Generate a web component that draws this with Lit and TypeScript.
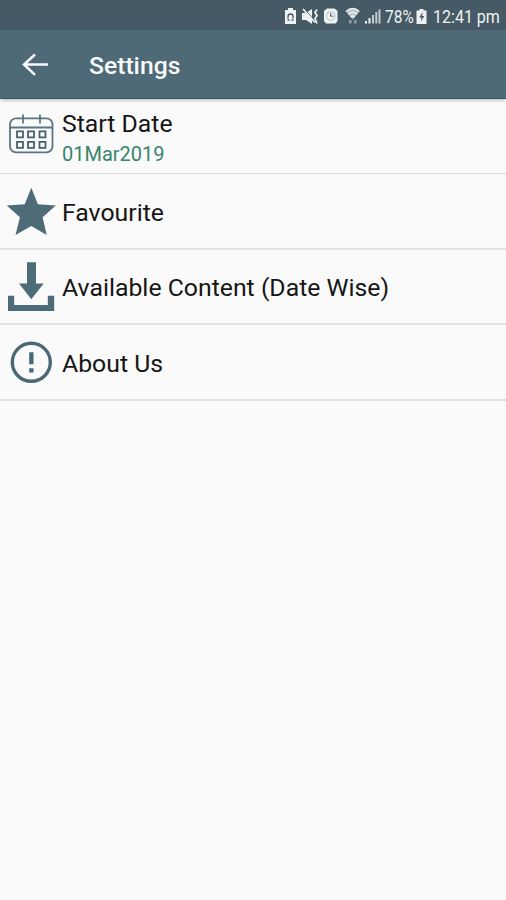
import { LitElement, html, svg, css } from "lit";
import { customElement } from "lit/decorators.js";

const calendar = svg`
  <g fill="none" stroke="#5c7581" stroke-width="1.8">
    <rect x="10" y="19.3" width="42.5" height="34" rx="6"/>
    <path d="M10 28.5H52.5M23 15.5V24.5M40 15.5V24.5"/>
    <path stroke="#44616f" d="M17 32.3h6v6h-6zM28 32.3h6v6h-6zM39.5 32.3h6v6h-6zM17 42.8h6v6h-6zM28 42.8h6v6h-6zM39.5 42.8h6v6h-6z"/>
  </g>`;
const star = svg`<path fill="#4e6b78" d="M31.3 13.7L37.9 30.2L55.8 31.6L42.6 43.2L46.7 61L31.3 52L15.5 61L19.9 43.2L6.8 31.6L24.7 30.2Z"/>`;
const download = svg`<path fill="#4e6b78" d="M27 13.3H36V34.5H43.7L31.3 50.2L19 34.5H27ZM8 46.7H14.2V56H47.8V46.7H54.2V62H8Z"/>`;
const about = svg`
  <circle cx="31.3" cy="37.3" r="19" fill="none" stroke="#4a6877" stroke-width="3.4"/>
  <path fill="#4a6877" d="M29.2 27.3H33.5V39.2H29.2ZM29.2 43.3H33.5V47.4H29.2Z"/>`;

@customElement("app-root")
export class AppRoot extends LitElement {
  static styles = css`
    :host {
      display: block;
      height: 900px;
      background: #fafafa;
      font-family: Roboto, "Noto Sans", sans-serif;
    }
    .status {
      height: 30px;
      box-sizing: border-box;
      padding: 2px 6px 0 0;
      background: #455a64;
      color: #eef2f3;
      display: flex;
      align-items: center;
      justify-content: flex-end;
      white-space: nowrap;
    }
    .status svg { display: block; flex: none; }
    .percent { width: 29px; font-size: 18px; }
    .clock { width: 67px; font-size: 18px; margin-left: 4px; }
    .narrow { display: block; transform-origin: 0 50%; }
    .percent .narrow { transform: translateX(1px) scaleX(0.86); }
    .clock .narrow { transform: scaleX(0.89); }
    .bar {
      height: 69px;
      box-sizing: border-box;
      background: #4e6a77;
      border-bottom: 1px solid #385565;
      display: flex;
      align-items: center;
      color: #f8fafb;
      box-shadow: 0 3px 3px -1px #c3ccc9;
    }
    .bar svg { width: 89px; height: 69px; flex: none; }
    h1 { margin: 3px 0 0; font-size: 24.7px; line-height: 30px; font-weight: 500; }
    .row {
      box-sizing: border-box;
      height: 76px;
      border-bottom: 2px solid #e1e2e2;
      display: flex;
      align-items: center;
      color: #161616;
      overflow: hidden;
    }
    .date { height: 75px; border-bottom: 1px solid #d9dbdb; }
    .download { height: 75px; }
    .icon { width: 62px; height: 74px; flex: none; align-self: flex-start; }
    .download .icon { margin-top: -1px; }
    .title { font-size: 24.8px; line-height: 30px; margin-top: 3px; white-space: nowrap; }
    .date .title { margin: 4px 0 1px; }
    .star .title { margin-top: 4px; }
    .sub { font-size: 20px; line-height: 28px; color: #38856c; }
  `;

  row(icon: unknown, title: string, cls = "", sub = "") {
    return html`<div class="row ${cls}">
      <svg class="icon" viewBox="0 0 62 74">${icon}</svg>
      <div>
        <div class="title">${title}</div>
        ${sub ? html`<div class="sub">${sub}</div>` : ""}
      </div>
    </div>`;
  }

  render() {
    return html`
      <div class="status">
        <svg width="102" height="28" viewBox="282 2 102 28" fill="#eef2f3">
          <path d="M288 8h5v2h3v14h-11V10h3z"/>
          <path d="M288 18.5v-2a2.5 2.5 0 0 1 5 0v2M287.5 20h2M291.5 20h2" fill="none" stroke="#455a64" stroke-width="1.3"/>
          <path d="M302 13h4l6-4v15l-6-4h-4z"/>
          <path d="M304.5 9l11 12.5" stroke="#455a64" stroke-width="1"/>
          <path d="M303 9l12 13.5M317 9.5l-2 3 2 3-2 3 2 5" fill="none" stroke="#eef2f3" stroke-width="1.7"/>
          <path d="M324 11l3-2.5h7.5l3 2.5v10l-2 2.5h-9.5l-2-2.5z"/>
          <circle cx="330.7" cy="16" r="4.3" fill="none" stroke="#b4bec2" stroke-width="1"/>
          <path d="M330.7 13v3.2h2.5" fill="none" stroke="#455a64"/>
          <path d="M346 11.5q6.7-6 13.4 0l-6.7 8z" opacity=".7"/>
          <path d="M346 11.5q6.7-6 13.4 0M348.3 14.3q4.4-4 8.8 0M350.6 17q2.1-2 4.2 0" fill="none" stroke="#eef2f3" stroke-width="1.5"/>
          <path d="M349 20h2.5v3.5H349zM354 20h2.5v3.5H354z" opacity=".45"/>
          <path d="M365 21h2v2.5h-2zM368.5 18h2v5.5h-2z"/>
          <path d="M372 15h2v8.5h-2zM375.3 12h2v11.5h-2zM378.5 9.5h2v14h-2z" opacity=".75"/>
        </svg>
        <div class="percent"><span class="narrow">78%</span></div>
        <svg width="16" height="28" viewBox="414 2 16 28" fill="#eef2f3">
          <path d="M420.5 9h4v1.5h3V24h-10V10.5h3z"/>
          <path d="M423.8 12l-3.6 5.5h2.3l-.7 4 3.6-5.5h-2.3z" fill="#455a64"/>
        </svg>
        <div class="clock"><span class="narrow">12:41 pm</span></div>
      </div>
      <div class="bar">
        <svg viewBox="0 30 89 69" fill="none" stroke="#f8fafb" stroke-width="2.5">
          <path d="M48 64.5H24M35 54.5L24 64.5L35 74.8"/>
        </svg>
        <h1>Settings</h1>
      </div>
      ${this.row(calendar, "Start Date", "date", "01Mar2019")}
      ${this.row(star, "Favourite", "star")}
      ${this.row(download, "Available Content (Date Wise)", "download")}
      ${this.row(about, "About Us")}
    `;
  }
}
